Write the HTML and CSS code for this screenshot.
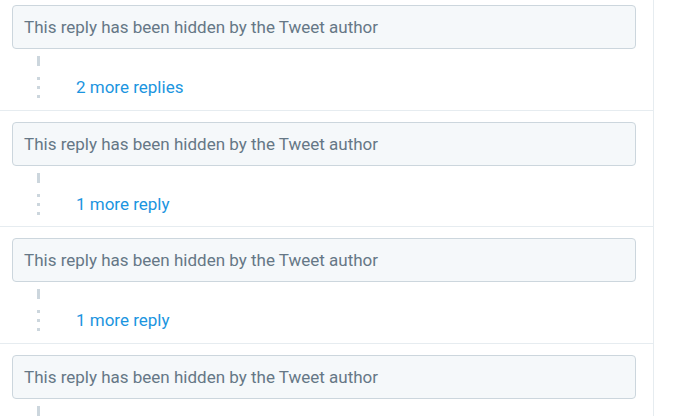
FILE: index.html
```html
<!DOCTYPE html>
<html lang="en">
<head>
    <meta charset="UTF-8">
    <meta name="viewport" content="width=device-width, initial-scale=1.0">
    <title>Replies</title>
    <link rel="stylesheet" href="styles.css">
</head>
<body>
    <div class="timeline">
        <div class="conversation">
            <div class="hidden-reply">This reply has been hidden by the Tweet author</div>
            <div class="more-row">
                <div class="thread-line">
                    <span class="solid"></span>
                    <span class="dot"></span>
                    <span class="dot"></span>
                    <span class="dot"></span>
                </div>
                <a class="more-link" href="#">2 more replies</a>
            </div>
        </div>

        <div class="conversation">
            <div class="hidden-reply">This reply has been hidden by the Tweet author</div>
            <div class="more-row">
                <div class="thread-line">
                    <span class="solid"></span>
                    <span class="dot"></span>
                    <span class="dot"></span>
                    <span class="dot"></span>
                </div>
                <a class="more-link" href="#">1 more reply</a>
            </div>
        </div>

        <div class="conversation">
            <div class="hidden-reply">This reply has been hidden by the Tweet author</div>
            <div class="more-row">
                <div class="thread-line">
                    <span class="solid"></span>
                    <span class="dot"></span>
                    <span class="dot"></span>
                    <span class="dot"></span>
                </div>
                <a class="more-link" href="#">1 more reply</a>
            </div>
        </div>

        <div class="conversation">
            <div class="hidden-reply">This reply has been hidden by the Tweet author</div>
            <div class="more-row">
                <div class="thread-line">
                    <span class="solid"></span>
                    <span class="dot"></span>
                    <span class="dot"></span>
                    <span class="dot"></span>
                </div>
                <a class="more-link" href="#">1 more reply</a>
            </div>
        </div>
    </div>
</body>
</html>
```

FILE: styles.css
```css
body {
    margin: 0;
    padding: 0;
    background: #fff;
    font-family: Roboto, "Noto Sans", Arial, sans-serif;
    overflow: hidden;
}

.timeline {
    width: 653px;
    border-right: 1px solid #e6ecf0;
    margin-top: -6px;
    min-height: 500px;
}

.conversation {
    padding: 11px 17px 11.67px 12px;
    border-bottom: 1px solid #e6ecf0;
}

/* Hidden reply notice */
.hidden-reply {
    background: #f5f8fa;
    border: 1px solid #ccd6dd;
    border-radius: 4px;
    padding: 11px 11px;
    line-height: 20px;
    font-size: 17px;
    color: #657786;
}

.more-row {
    display: flex;
    align-items: flex-end;
    padding-left: 25px;
    margin-top: 7px;
}

.thread-line {
    display: flex;
    flex-direction: column;
    align-items: center;
    width: 3px;
}

.thread-line .solid {
    width: 3px;
    height: 10px;
    background: #ccd6dd;
    margin-bottom: 11px;
}

.thread-line .dot {
    width: 3px;
    height: 3px;
    background: #ccd6dd;
    margin-bottom: 6px;
}

.thread-line .dot:last-child {
    margin-bottom: 0;
}

.more-link {
    margin-left: 36px;
    font-size: 17px;
    line-height: 21px;
    color: #1b95e0;
    text-decoration: none;
}
```
